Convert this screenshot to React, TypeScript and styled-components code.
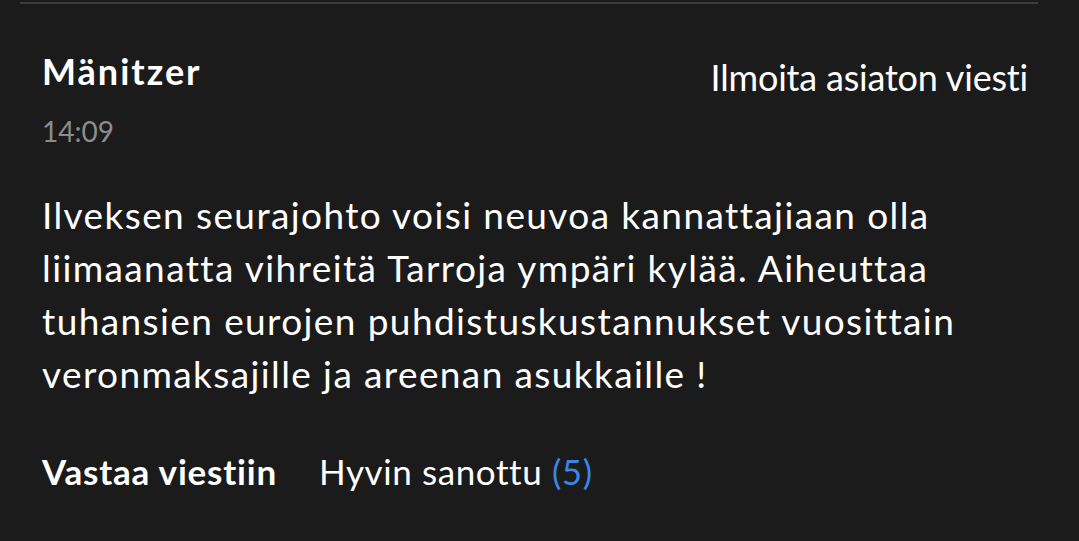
import React from "react";
import styled, { createGlobalStyle } from "styled-components";

const Global = createGlobalStyle`
  html, body { margin: 0; padding: 0; background: #1b1b1b; }
  body { font-family: Lato, "Open Sans", sans-serif; color: #fff; }
`;

const Page = styled.div`
  width: 1079px;
  height: 541px;
  background: #1b1b1b;
  padding: 0 41px 0 20px;
  box-sizing: border-box;
  overflow: hidden;
`;

const Divider = styled.div`
  height: 2px;
  margin-top: 2px;
  background: #3c3c3c;
`;

const Comment = styled.article`
  padding: 0 10px 0 22px;
`;

const Header = styled.header`
  display: flex;
  justify-content: space-between;
  align-items: flex-start;
  margin-top: 47px;
`;

const Meta = styled.div`
  display: flex;
  flex-direction: column;
`;

const Author = styled.div`
  font-size: 36px;
  font-weight: 700;
  line-height: 40px;
  letter-spacing: 2px;
`;

const Time = styled.div`
  font-size: 28px;
  color: #8c8c8c;
  line-height: 32px;
  margin-top: 24px;
`;

const Report = styled.button`
  background: none;
  border: none;
  padding: 0;
  color: #fff;
  font-family: inherit;
  font-size: 36px;
  line-height: 40px;
  letter-spacing: -0.2px;
  margin-top: 6px;
  cursor: pointer;
`;

const Body = styled.p`
  margin: 41px 0 0;
  font-size: 37px;
  line-height: 53px;
  letter-spacing: 1.4px;
  max-width: 960px;
`;

const Actions = styled.div`
  display: flex;
  align-items: center;
  gap: 42px;
  margin-top: 51px;
`;

const ActionButton = styled.button<{ $bold?: boolean }>`
  background: none;
  border: none;
  padding: 0;
  color: #fff;
  font-family: inherit;
  font-size: 35px;
  line-height: 40px;
  font-weight: ${(p) => (p.$bold ? 700 : 400)};
  letter-spacing: ${(p) => (p.$bold ? "0.8px" : "0.6px")};
  cursor: pointer;
`;

const Count = styled.span`
  color: #3a86e6;
`;

export default function App() {
  return (
    <>
      <Global />
      <Page>
        <Divider />
        <Comment>
          <Header>
            <Meta>
              <Author>Mänitzer</Author>
              <Time>14:09</Time>
            </Meta>
            <Report>Ilmoita asiaton viesti</Report>
          </Header>
          <Body>
            Ilveksen seurajohto voisi neuvoa kannattajiaan olla liimaanatta vihreitä Tarroja ympäri kylää. Aiheuttaa tuhansien eurojen puhdistuskustannukset vuosittain veronmaksajille ja areenan asukkaille !
          </Body>
          <Actions>
            <ActionButton $bold>Vastaa viestiin</ActionButton>
            <ActionButton>
              Hyvin sanottu <Count>(5)</Count>
            </ActionButton>
          </Actions>
        </Comment>
      </Page>
    </>
  );
}
